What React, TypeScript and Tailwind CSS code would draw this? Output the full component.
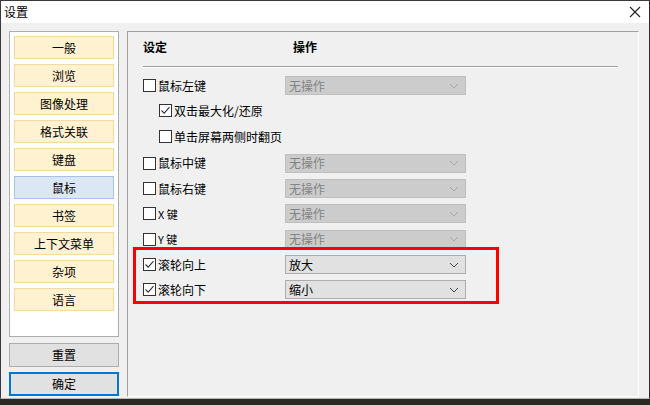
import React from "react";

const font = { fontFamily: '"Noto Sans CJK SC", "Microsoft YaHei", sans-serif' };

function Check({ checked }: { checked?: boolean }) {
  return (
    <div className="w-[13px] h-[13px] border border-[#333333] bg-white flex items-center justify-center shrink-0">
      {checked && (
        <svg width="11" height="11" viewBox="0 0 11 11">
          <path d="M1.5 5.5 L4.2 8.2 L9.5 2.2" fill="none" stroke="#333" strokeWidth="1.1" />
        </svg>
      )}
    </div>
  );
}

function Chevron({ color }: { color: string }) {
  return (
    <svg width="10" height="6" viewBox="0 0 10 6">
      <path d="M1 1 L5 5 L9 1" fill="none" stroke={color} strokeWidth="1" />
    </svg>
  );
}

function Select({ value, disabled }: { value: string; disabled?: boolean }) {
  return (
    <div
      className={
        "w-[181px] h-[19px] flex items-center justify-between pl-[3px] pr-[6px] border text-[12px] " +
        (disabled
          ? "bg-[#cccccc] border-[#bfbfbf] text-[#838383]"
          : "bg-[#e1e1e1] border-[#adadad] text-black")
      }
    >
      <span className="leading-none">{value}</span>
      <Chevron color={disabled ? "#a8a8a8" : "#444"} />
    </div>
  );
}

function Row({
  label,
  checked,
  select,
  disabled,
  indent,
  h = "h-[25px]",
}: {
  label: React.ReactNode;
  checked?: boolean;
  select?: string;
  disabled?: boolean;
  indent?: boolean;
  h?: string;
}) {
  return (
    <div className={"flex items-center " + h}>
      <div className={"w-[142px] flex items-center gap-[2px] " + (indent ? "pl-[16px]" : "")}>
        <Check checked={checked} />
        <span className="text-[12px] leading-none text-black whitespace-nowrap">{label}</span>
      </div>
      {select && <Select value={select} disabled={disabled} />}
    </div>
  );
}

function NavBtn({ label, active }: { label: string; active?: boolean }) {
  return (
    <div
      className={
        "h-[23px] flex items-center justify-center text-[12px] text-black border " +
        (active ? "bg-[#dce7f6] border-[#a9c1e8]" : "bg-[#fff2d0] border-[#f5d9a2]")
      }
    >
      {label}
    </div>
  );
}

export default function App() {
  const nav = ["一般", "浏览", "图像处理", "格式关联", "键盘", "鼠标", "书签", "上下文菜单", "杂项", "语言"];
  return (
    <div className="w-[650px] h-[405px] bg-[#2b2a22] overflow-hidden" style={font}>
      <div className="w-[650px] h-[399px] flex flex-col bg-[#f0f0f0] border-t border-l border-r border-t-[#3a3a3a] border-l-[#3a3a3a] border-r-[#2a2a2a] border-b border-b-[#b8b8b8]">
        <div className="h-[22px] bg-white flex items-center justify-between shrink-0">
          <span className="text-[12px] pl-[3px] text-black">设置</span>
          <svg width="12" height="12" viewBox="0 0 12 12" className="mr-[8px]">
            <path d="M1 1 L11 11 M11 1 L1 11" stroke="#222" strokeWidth="1.1" />
          </svg>
        </div>
        <div className="flex flex-1 pl-[8px] pr-[8px] pt-[8px] gap-[8px]">
          <div className="w-[110px] flex flex-col">
            <div className="h-[306px] bg-white border border-[#adadad] pt-[4px] px-[4px] flex flex-col gap-[5px]">
              {nav.map((n) => (
                <NavBtn key={n} label={n} active={n === "鼠标"} />
              ))}
            </div>
            <div className="mt-[6px] h-[24px] bg-[#e1e1e1] border border-[#adadad] flex items-center justify-center text-[12px] text-black">
              重置
            </div>
            <div className="mt-[5px] h-[24px] bg-[#e1e1e1] border-2 border-[#0078d7] flex items-center justify-center text-[12px] text-black">
              确定
            </div>
          </div>
          <div className="relative w-[512px] h-[366px] border-t border-l border-[#a0a0a0] border-r border-b border-r-white border-b-white pl-[15px]">
            <div className="h-[20px] mt-[5px] flex items-center text-[12px] font-bold text-black">
              <span className="w-[150px]">设定</span>
              <span>操作</span>
            </div>
            <div className="mt-[9px] mr-[20px] h-[2px] border-t border-[#a0a0a0] border-b border-b-white" />
            <div className="mt-[5px] flex flex-col">
              <Row label="鼠标左键" select="无操作" disabled />
              <Row label="双击最大化/还原" checked indent />
              <Row label="单击屏幕两侧时翻页" indent h="h-[27px]" />
              <Row label="鼠标中键" select="无操作" disabled h="h-[26px]" />
              <Row label="鼠标右键" select="无操作" disabled />
              <Row label={<span className="text-[11px]">X 键</span>} select="无操作" disabled />
              <Row label={<span className="text-[11px]">Y 键</span>} select="无操作" disabled h="h-[26px]" />
              <Row label="滚轮向上" checked select="放大" />
              <Row label="滚轮向下" checked select="缩小" />
            </div>
            <div className="absolute left-[5px] top-[215px] w-[366px] h-[57px] border-[3px] border-[#ff0000]" />
          </div>
        </div>
      </div>
    </div>
  );
}
